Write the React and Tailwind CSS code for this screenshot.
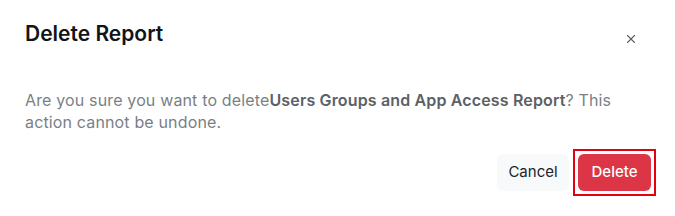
import { X } from "lucide-react";

const App = () => {
  return (
    <div className="w-[675px] h-[216px] bg-white overflow-hidden font-['Inter',sans-serif]">
      {/**header */}
      <header className="flex items-start justify-between pl-[25px] pr-[37px] pt-5">
        <h1 className="text-[21px] leading-7 font-semibold text-[#111418]">Delete Report</h1>
        <button className="mt-[12px] text-[#5f646a]" aria-label="Close">
          <X className="w-[14px] h-[14px]" strokeWidth={2} />
        </button>
      </header>

      {/**content */}
      <div className="px-[25px] mt-[41px]">
        <p className="text-[16px] tracking-[0.15px] leading-[22px] text-[#7a7f85]">
          Are you sure you want to delete
          <span className="font-semibold text-[#5c6166]">Users Groups and App Access Report</span>? This
          action cannot be undone.
        </p>
      </div>

      {/**footer */}
      <div className="flex justify-end items-center gap-1 pr-[19px] mt-[16px]">
        <button className="w-[72px] h-[37px] rounded-md bg-[#f8f9fa] text-[15px] text-[#212529]">
          Cancel
        </button>
        <div className="p-[3px] border-2 border-[#e3000f]">
          <button className="w-[73px] h-[37px] rounded-md bg-[#dc3545] text-[15px] font-medium text-white">
            Delete
          </button>
        </div>
      </div>
    </div>
  );
};

export default App;
